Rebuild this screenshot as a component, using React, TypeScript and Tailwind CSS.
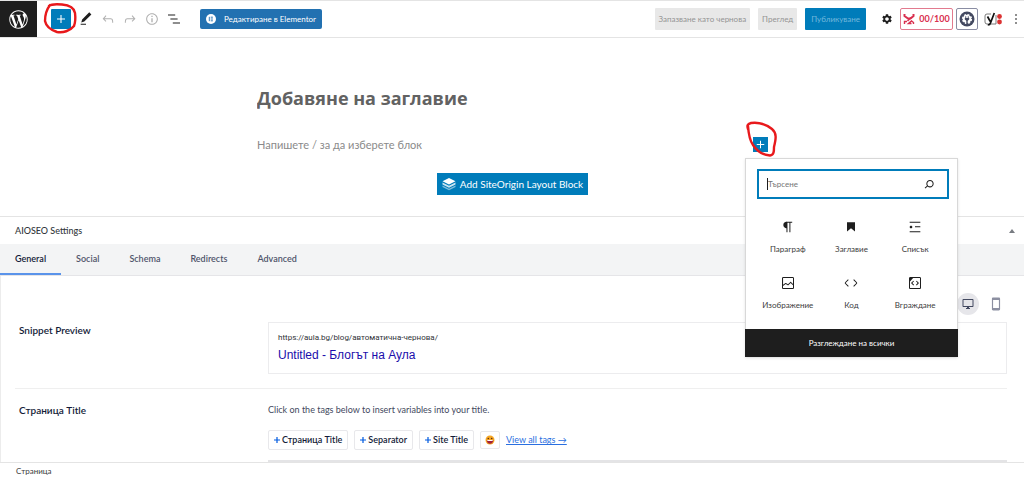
import type { ReactNode } from 'react';
import { FaWordpressSimple } from 'react-icons/fa';
import { MdSettings, MdOutlineDesktopWindows, MdSmartphone } from 'react-icons/md';

const icons = {
  plus: 'M18 11.2h-5.2V6h-1.6v5.2H6v1.6h5.2V18h1.6v-5.2H18z',
  edit: 'M20.1 5.1L16.9 2 6.2 12.7l-1.3 4.4 4.5-1.3L20.1 5.1zM4 20.8h8v-1.5H4v1.5z',
  undo: 'M18.3 11.7c-.6-.6-1.4-.9-2.3-.9H6.7l2.9-3.3-1.1-1-4.5 5L8.5 16l1-1-2.7-2.7H16c.5 0 .9.2 1.3.5 1 1 1 3.4 1 4.5v.3h1.5v-.2c0-1.5 0-4.3-1.5-5.7z',
  redo: 'M15.6 6.5l-1.1 1 2.9 3.3H8c-.9 0-1.7.3-2.3.9-1.4 1.5-1.4 4.2-1.4 5.6v.2h1.5v-.3c0-1.1 0-3.5 1-4.5.3-.3.7-.5 1.3-.5h9.2L14.5 15l1.1 1.1 4.6-4.6-4.6-5z',
  info: 'M12 3.2c-4.8 0-8.8 3.9-8.8 8.8 0 4.8 3.9 8.8 8.8 8.8 4.8 0 8.8-3.9 8.8-8.8 0-4.8-4-8.8-8.8-8.8zm0 16c-4 0-7.2-3.3-7.2-7.2C4.8 8 8 4.8 12 4.8s7.2 3.3 7.2 7.2c0 4-3.2 7.2-7.2 7.2zM11 17h2v-6h-2v6zm0-8h2V7h-2v2z',
  listView: 'M13.8 5.2H3v1.5h10.8V5.2zm-3.6 12v1.5H21v-1.5H10.2zm7.2-6H6.6v1.5h10.8v-1.5z',
  more: 'M13 19h-2v-2h2v2zm0-6h-2v-2h2v2zm0-6h-2V5h2v2z',
  search: 'M13.5 6C10.5 6 8 8.5 8 11.5c0 1.1.3 2.1.9 3l-3.4 3 1 1.1 3.4-2.9c1 .9 2.2 1.4 3.6 1.4 3 0 5.5-2.5 5.5-5.5C19 8.5 16.5 6 13.5 6zm0 9.5c-2.2 0-4-1.8-4-4s1.8-4 4-4 4 1.8 4 4-1.8 4-4 4z',
  paragraph: 'M18.3 4H9.9v-.1l-.9.2c-2.3.4-4 2.4-4 4.8s1.7 4.4 4 4.8l.7.1V20h1.5V5.5h2.9V20h1.5V5.5h2.7V4z',
  heading: 'M6 5V18.6L12 13.8L18 18.6V5H6Z',
  list: 'M4 4v1.5h16V4H4zm8 8.5h8V11h-8v1.5zM4 20h16v-1.5H4V20zm4-8c0-1.1-.9-2-2-2s-2 .9-2 2 .9 2 2 2 2-.9 2-2z',
  image: 'M19 3H5c-1.1 0-2 .9-2 2v14c0 1.1.9 2 2 2h14c1.1 0 2-.9 2-2V5c0-1.1-.9-2-2-2zM5 4.5h14c.3 0 .5.2.5.5v8.4l-3-2.9c-.3-.3-.8-.3-1 0L11.9 14 9 12c-.3-.2-.6-.2-.8 0l-3.6 2.6V5c-.1-.3.1-.5.4-.5zm14 15H5c-.3 0-.5-.2-.5-.5v-2.4l4.1-3 3 1.9c.3.2.7.2.9-.1L16 12l3.5 3.4V19c0 .3-.2.5-.5.5z',
  code: 'M20.8 10.7l-4.3-4.3-1.1 1.1 4.3 4.3c.1.1.1.3 0 .4l-4.3 4.3 1.1 1.1 4.3-4.3c.7-.8.7-1.9 0-2.6zM4.2 11.8l4.3-4.3-1-1-4.3 4.3c-.7.7-.7 1.8 0 2.5l4.3 4.3 1.1-1.1-4.3-4.3c-.2-.1-.2-.3-.1-.4z',
  embed: 'M19 3H5c-1.1 0-2 .9-2 2v14c0 1.1.9 2 2 2h14c1.1 0 2-.9 2-2V5c0-1.1-.9-2-2-2zm.5 16c0 .3-.2.5-.5.5H5c-.3 0-.5-.2-.5-.5V9.8l4.7-5.3H19c.3 0 .5.2.5.5v14zm-6-9.5L16 12l-2.5 2.8 1.1 1L18 12l-3.5-3.5-1 1zm-3 0l-1-1L6 12l3.5 3.8 1.1-1L8 12l2.5-2.5z',
};

type IconName = keyof typeof icons;

const tools: { name: IconName; label: string; disabled?: boolean }[] = [
  { name: 'edit', label: 'Tools' },
  { name: 'undo', label: 'Undo', disabled: true },
  { name: 'redo', label: 'Redo', disabled: true },
  { name: 'info', label: 'Details', disabled: true },
  { name: 'listView', label: 'List view' },
];

const blocks: { icon: IconName; title: string }[] = [
  { icon: 'paragraph', title: 'Параграф' },
  { icon: 'heading', title: 'Заглавие' },
  { icon: 'list', title: 'Списък' },
  { icon: 'image', title: 'Изображение' },
  { icon: 'code', title: 'Код' },
  { icon: 'embed', title: 'Вграждане' },
];

const tabs = ['General', 'Social', 'Schema', 'Redirects', 'Advanced'];
const tags = ['Страница Title', 'Separator', 'Site Title'];

function Icon({ name, className = 'size-4' }: { name: IconName; className?: string }) {
  return (
    <svg viewBox="0 0 24 24" fill="currentColor" className={className} aria-hidden="true">
      <path d={icons[name]} />
    </svg>
  );
}

function TopBar() {
  return (
    <header className="flex items-center border-y border-[#e4e4e4] bg-white">
      <a href="#" aria-label="WordPress" className="flex h-9 w-[37px] shrink-0 items-center justify-center bg-[#1e1e1e] text-white">
        <FaWordpressSimple className="size-[19px]" />
      </a>

      <div className="ml-3.5 flex items-center gap-[7px]">
        <div className="relative">
          <button aria-label="Add block" className="flex size-5 items-center justify-center rounded-[1px] bg-[#007cba] text-white">
            <Icon name="plus" />
          </button>
          <svg viewBox="0 0 36 34" className="pointer-events-none absolute -left-2 -top-2 h-[34px] w-9 max-w-none" fill="none" stroke="#e8191c" strokeWidth="2.400" strokeLinecap="round" strokeLinejoin="round">
            <path d="M6 5C9 2.500 14 3 19 3.500C25 4 31 6 32 12C32.500 16 32.500 21 31 25C27 30 20 32 14 31C8 29 3 25 2 20C2 14 4 8 7 4" />
          </svg>
        </div>
        <div className="flex items-center gap-1.5">
          {tools.map(tool => (
            <button key={tool.name} aria-label={tool.label} disabled={tool.disabled} className="text-[#1e1e1e] disabled:text-[#b0b0b0]">
              <Icon name={tool.name} />
            </button>
          ))}
        </div>
      </div>

      <button className="ml-[18px] flex h-5 items-center gap-2 rounded-xs bg-[#2271b1] px-1.5 text-[8px] text-white">
        <svg viewBox="0 0 10 10" className="size-2.5">
          <circle cx="5" cy="5" r="5" fill="#fff" />
          <path d="M3.300 2.800v4.400M4.700 3.200h2.200M4.700 5h2.200M4.700 6.800h2.200" stroke="#2271b1" strokeWidth=".9" />
        </svg>
        Редактиране в Elementor
      </button>

      <div className="ml-auto flex items-center text-[8px]">
        <button className="h-[22px] rounded-[1px] bg-[#e8e8e8] px-1 text-[#949494]">Запазване като чернова</button>
        <button className="ml-2 h-[22px] rounded-[1px] bg-[#e8e8e8] px-1 text-[#949494]">Преглед</button>
        <button className="ml-2 h-[22px] rounded-[1px] bg-[#007cba] px-1.5 text-[#72b8dc]">Публикуване</button>
        <button aria-label="Settings" className="ml-[15px] text-[#1e1e1e]">
          <MdSettings className="size-3" />
        </button>
        <button className="ml-[7px] flex h-[22px] w-[53px] items-center justify-center gap-1 rounded-xs border border-[#e27a8e] text-[9px] font-bold text-[#d9304f]">
          <svg viewBox="0 0 12 12" className="size-3" fill="none" stroke="currentColor">
            <path d="M1.500 1v2L5 5.500h2.500L10.500 3V1" strokeWidth="2" />
            <path d="M1.500 11V8.500H4M10.500 11V9.500L8.500 8L5.500 10.500H8.500" strokeWidth="1.400" />
            <path d="M4.500 8L8 4.500" strokeWidth="1.600" />
          </svg>
          00/100
        </button>
        <button aria-label="AIOSEO" className="ml-[3px] flex size-[22px] items-center justify-center rounded-xs border border-[#8a8da3]">
          <svg viewBox="0 0 16 16" className="size-4">
            <circle cx="8" cy="8" r="7.500" fill="#434960" />
            <circle cx="8" cy="8" r="4.300" fill="#fff" />
            <circle cx="8" cy="8" r="4.500" fill="none" stroke="#fff" strokeWidth="1.200" strokeDasharray="2 1.530" />
            <path d="M6.300 5.300h.9v1.800h1.600V5.300h.9v1.800h.5v1.500L8.700 9.700v3.200H7.300V9.700L5.800 8.600V7.100h.5z" fill="#434960" />
          </svg>
        </button>
        <button aria-label="Yoast SEO" className="ml-1.5">
          <svg viewBox="0 0 18 14" className="h-3.5 w-[18px]" fill="none">
            <path d="M7 2H3Q1 2 1 4v6q0 2 2 2h9V3" stroke="#6b6b6b" strokeWidth=".9" />
            <path d="M3.500 4.500L6.300 9.500M10.300 1L6.500 11Q6 13 3.800 13" stroke="#111" strokeWidth="1.700" />
            <circle cx="15.500" cy="4.500" r="2.400" fill="#dc3232" />
            <circle cx="15.500" cy="10" r="2.400" fill="#dc3232" />
          </svg>
        </button>
        <button aria-label="Options" className="ml-1.5 text-[#1e1e1e]">
          <Icon name="more" />
        </button>
      </div>
    </header>
  );
}

function BlockPicker() {
  return (
    <div className="absolute left-full top-full z-10 mt-1.5 w-[213px] -translate-x-[23px] border border-[#d8d8d8] bg-white shadow-sm">
      <label className="ml-[11px] mr-2 mt-2.5 flex h-[30px] items-center border-2 border-[#007cba] pl-2 pr-2.5">
        <span className="h-3 w-px bg-[#1e1e1e]" />
        <input aria-label="Търсене" placeholder="Търсене" className="min-w-0 flex-1 text-[8px] outline-none placeholder:text-[#757575]" />
        <Icon name="search" className="size-4 text-[#1e1e1e]" />
      </label>
      <div className="mx-2.5 mb-2 mt-2.5 grid grid-cols-3">
        {blocks.map(block => (
          <button key={block.title} className="flex h-14 flex-col items-center justify-center gap-2 text-[8px] leading-3 text-[#3c3c3c]">
            <Icon name={block.icon} className="size-4 text-[#1e1e1e]" />
            {block.title}
          </button>
        ))}
      </div>
      <button className="-mx-px -mb-px block h-7 w-[213px] bg-[#1e1e1e] text-[8px] text-white">Разглеждане на всички</button>
    </div>
  );
}

function Editor() {
  return (
    <main className="mx-auto w-1/2 pb-5 pl-px pt-12">
      <input
        aria-label="Добавяне на заглавие"
        placeholder="Добавяне на заглавие"
        className="block h-6 w-full font-['Open_Sans',sans-serif] text-[18px] font-bold outline-none placeholder:text-[#626262]"
      />
      <div className="mt-[23px] flex items-center">
        <input
          aria-label="Напишете / за да изберете блок"
          placeholder="Напишете / за да изберете блок"
          className="h-[22px] min-w-0 flex-1 text-[11px] outline-none placeholder:text-[#8a8a8a]"
        />
        <div className="relative">
          <button aria-label="Add block" className="flex size-[15px] items-center justify-center bg-[#007cba] text-white">
            <Icon name="plus" className="size-[15px]" />
          </button>
          <svg viewBox="0 0 36 38" className="pointer-events-none absolute -left-2 -top-4 z-20 h-[38px] w-9 max-w-none" fill="none" stroke="#e8191c" strokeWidth="2.400" strokeLinecap="round" strokeLinejoin="round">
            <path d="M3 5C3.500 12 5 20 8 24C12 30 18 34 25 34.500C29 34 29 30 29 26C31 18 32 12 27 8C22 4 14 1 6 2C2 3 2 5 3 8" />
          </svg>
          <BlockPicker />
        </div>
      </div>
      <div className="mt-[18px] flex justify-center">
        <button className="flex h-[22px] items-center gap-1 bg-[#007cba] px-[5px] text-[10px] text-white">
          <svg viewBox="0 0 14 14" className="size-3.5" fill="#fff">
            <path d="M7 1l6.500 3.300L7 7.600.5 4.300z" />
            <path d="M.5 5.500L7 8.800 13.500 5.500v2L7 10.800.5 7.500z" opacity=".8" />
            <path d="M.5 8.500L7 11.800l6.500-3.300V10L7 13.300.5 10z" opacity=".5" />
          </svg>
          Add SiteOrigin Layout Block
        </button>
      </div>
    </main>
  );
}

function SettingsRow({ title, children }: { title: string; children: ReactNode }) {
  return (
    <div className="flex pl-1">
      <h3 className="w-[249px] shrink-0 text-[10px] font-semibold leading-4 text-[#141b38]">{title}</h3>
      <div className="min-w-0 flex-1">{children}</div>
    </div>
  );
}

function SeoSettings() {
  return (
    <section className="mt-px border-y border-[#e4e4e4]">
      <div className="flex h-[27px] items-center justify-between pl-[15px] pr-2">
        <h2 className="text-[9px] font-medium text-[#32373c]">AIOSEO Settings</h2>
        <button aria-label="Toggle panel">
          <svg viewBox="0 0 8 8" className="size-2" fill="#787c82">
            <path d="M4 2l3 4H1z" />
          </svg>
        </button>
      </div>
      <nav className="flex border-b border-[#e5e5e8] bg-[#f3f4f5]">
        {tabs.map((tab, i) => (
          <a
            key={tab}
            href="#"
            className={`flex h-[31px] items-center border-b-2 px-[15px] text-[9px] font-semibold ${i === 0 ? 'border-[#5a93ea] text-[#141b38]' : 'border-transparent text-[#50556b]'}`}
          >
            {tab}
          </a>
        ))}
      </nav>
      <div className="border-l border-[#ececec] pl-3.5 pr-[17px]">
        <div className="flex items-center justify-end gap-2.5 pt-[17px]">
          <button aria-label="Desktop" className="flex size-[22px] items-center justify-center rounded-full bg-[#e6e6ea] text-[#434960]">
            <MdOutlineDesktopWindows className="size-3" />
          </button>
          <button aria-label="Mobile" className="mr-1 text-[#8c8fa1]">
            <MdSmartphone className="size-3.5" />
          </button>
        </div>
        <div className="mt-[7px] border-b border-[#efefef] pb-3.5">
          <SettingsRow title="Snippet Preview">
            <div className="border border-[#ececee] px-[9px] py-2">
              <p className="font-['Roboto',sans-serif] text-[8px] leading-[14px] text-[#303338]">https://aula.bg/blog/автоматична-чернова/</p>
              <p className="font-['Liberation_Sans',sans-serif] text-[12px] leading-5 text-[#1a0dab]">Untitled - Блогът на Аула</p>
            </div>
          </SettingsRow>
        </div>
        <div className="pt-[13px]">
          <SettingsRow title="Страница Title">
            <p className="text-[9px] leading-4 text-[#434960]">Click on the tags below to insert variables into your title.</p>
            <div className="mt-3 flex items-center gap-1.5">
              {tags.map(tag => (
                <button key={tag} className="flex h-5 items-center gap-0.5 rounded-xs border border-[#e8e8eb] px-[5px] text-[9px] font-semibold text-[#141b38]">
                  <svg viewBox="0 0 6 6" className="size-1.5" stroke="#005ae0" strokeWidth="1.200">
                    <path d="M3 0v6M0 3h6" />
                  </svg>
                  {tag}
                </button>
              ))}
              <button aria-label="Emoji" className="flex h-[18px] w-5 items-center justify-center rounded-xs border border-[#e8e8eb]">
                <svg viewBox="0 0 10 10" className="size-2.5">
                  <circle cx="5" cy="5" r="4.500" fill="#f5a623" />
                  <circle cx="3.300" cy="3.500" r=".8" fill="#5b2c1a" />
                  <circle cx="6.700" cy="3.500" r=".8" fill="#5b2c1a" />
                  <path d="M1.700 5h6.600Q8 8.700 5 8.700T1.700 5z" fill="#a3203a" />
                  <path d="M2.300 5h5.400v1H2.300z" fill="#fff" />
                </svg>
              </button>
              <a href="#" className="text-[9px] text-[#2a6fe0] underline">View all tags →</a>
            </div>
            <div className="mt-2.5 border-t-2 border-[#e4e4e6]" />
          </SettingsRow>
        </div>
      </div>
    </section>
  );
}

export default function App() {
  return (
    <div className="bg-white font-['Lato','Open_Sans',sans-serif] text-[#1e1e1e]">
      <TopBar />
      <Editor />
      <SeoSettings />
      <footer className="px-4 text-[8px] leading-4 text-[#3c3c3c]">Страница</footer>
    </div>
  );
}
